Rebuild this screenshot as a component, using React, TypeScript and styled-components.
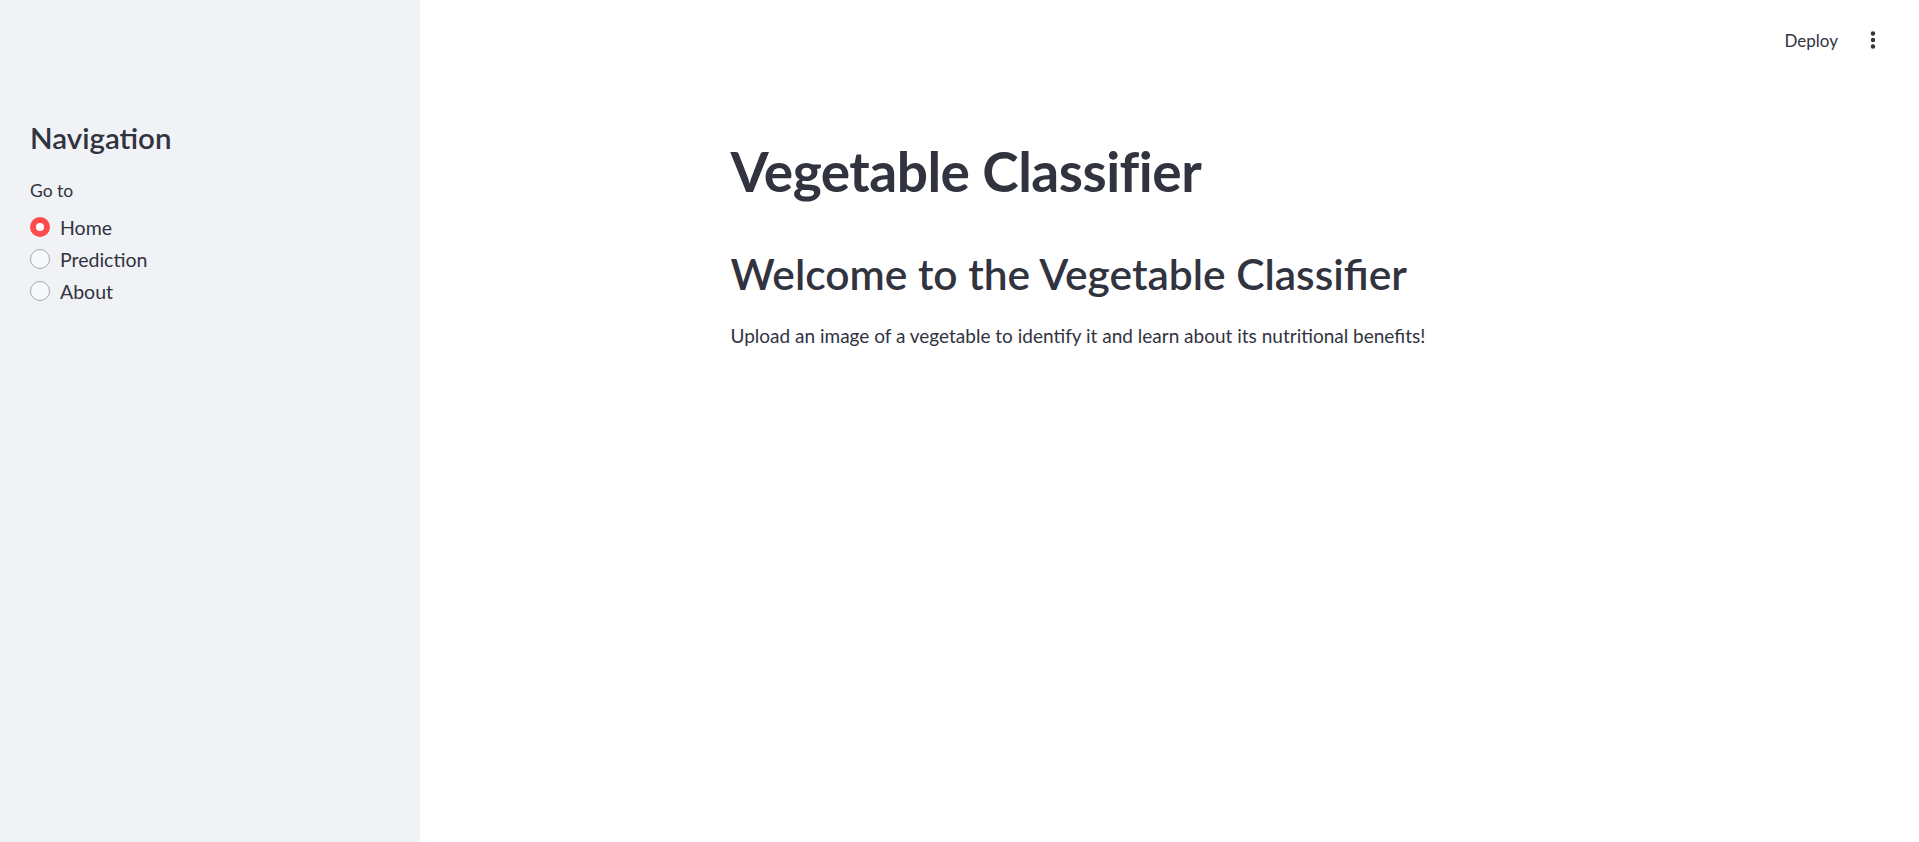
import { FC, useState } from 'react';
import styled, { createGlobalStyle } from 'styled-components';

const GlobalStyle = createGlobalStyle`
  html, body {
    margin: 0;
    padding: 0;
    background: #ffffff;
  }
  body {
    font-family: Lato, 'Noto Sans', sans-serif;
    color: #31333f;
  }
  * {
    box-sizing: border-box;
  }
`;

const Page = styled.div`
  display: flex;
  height: 100vh;
  overflow: hidden;
`;

const Sidebar = styled.aside`
  width: 420px;
  flex-shrink: 0;
  background: #f0f2f6;
  padding: 120px 30px 0;
`;

const SidebarTitle = styled.h1`
  margin: 0 0 25px;
  font-size: 29.5px;
  font-weight: 600;
  line-height: 1.2;
  color: #31333f;
`;

const RadioLabel = styled.div`
  font-size: 17.5px;
  line-height: 1.3;
  margin-bottom: 8px;
`;

const RadioList = styled.div`
  display: flex;
  flex-direction: column;
`;

const RadioRow = styled.label`
  display: flex;
  align-items: center;
  gap: 10px;
  height: 32px;
  font-size: 19.5px;
  cursor: pointer;
`;

const RadioDot = styled.span<{ $checked: boolean }>`
  width: 20px;
  height: 20px;
  border-radius: 50%;
  flex-shrink: 0;
  background: ${(p) => (p.$checked ? '#ffffff' : '#f8f9fb')};
  border: ${(p) => (p.$checked ? '6.5px solid #ff4b4b' : '1px solid #a3a8b4')};
`;

const Main = styled.main`
  flex: 1;
  display: flex;
  flex-direction: column;
`;

const Header = styled.header`
  height: 80px;
  display: flex;
  align-items: center;
  justify-content: flex-end;
  gap: 20px;
  padding-right: 39px;
`;

const DeployButton = styled.button`
  border: none;
  background: transparent;
  font-family: inherit;
  font-size: 17px;
  color: #31333f;
  padding: 6px 8px;
  cursor: pointer;
`;

const MenuButton = styled.button`
  border: none;
  background: transparent;
  display: flex;
  align-items: center;
  padding: 4px;
  cursor: pointer;
`;

const Content = styled.div`
  width: 878px;
  margin: 0 auto;
  padding-top: 58px;
`;

const Title = styled.h1`
  margin: 0;
  font-size: 55px;
  font-weight: 700;
  line-height: 1.2;
  letter-spacing: -0.5px;
`;

const Subtitle = styled.h2`
  margin: 44px 0 0;
  font-size: 42.5px;
  font-weight: 600;
  line-height: 1.2;
`;

const Paragraph = styled.p`
  margin: 22px 0 0;
  font-size: 19px;
  line-height: 1.6;
`;

const pages = ['Home', 'Prediction', 'About'];

const App: FC = () => {
  const [page, setPage] = useState<string>('Home');

  return (
    <>
      <GlobalStyle />
      <Page>
        <Sidebar>
          <SidebarTitle>Navigation</SidebarTitle>
          <RadioLabel>Go to</RadioLabel>
          <RadioList>
            {pages.map((p) => (
              <RadioRow key={p} onClick={() => setPage(p)}>
                <RadioDot $checked={page === p} />
                {p}
              </RadioRow>
            ))}
          </RadioList>
        </Sidebar>
        <Main>
          <Header>
            <DeployButton>Deploy</DeployButton>
            <MenuButton>
              <svg width="6" height="18" viewBox="0 0 6 18">
                <circle cx="3" cy="2.5" r="2.2" fill="#31333f" />
                <circle cx="3" cy="9" r="2.2" fill="#31333f" />
                <circle cx="3" cy="15.5" r="2.2" fill="#31333f" />
              </svg>
            </MenuButton>
          </Header>
          <Content>
            <Title>Vegetable Classifier</Title>
            <Subtitle>Welcome to the Vegetable Classifier</Subtitle>
            <Paragraph>
              Upload an image of a vegetable to identify it and learn about its
              nutritional benefits!
            </Paragraph>
          </Content>
        </Main>
      </Page>
    </>
  );
};

export default App;
